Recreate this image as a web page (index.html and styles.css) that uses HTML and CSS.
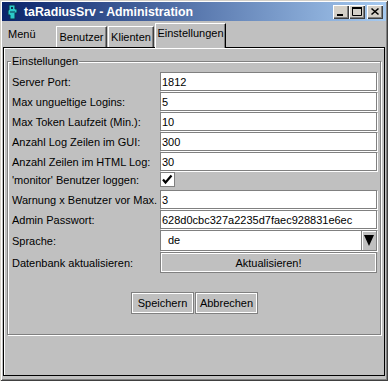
FILE: index.html
```html
<!DOCTYPE html>
<html lang="de">
<head>
    <meta charset="UTF-8">
    <title>taRadiusSrv - Administration</title>
    <link rel="stylesheet" href="styles.css">
</head>
<body>
    <div class="window">
        <div class="titlebar">
            <svg class="app-icon" width="16" height="16" viewBox="0 0 16 16">
                <path d="M4 1h6v4h2v4h-2v6H5v-4H3V6h1z" fill="#2ccaca" stroke="#0b3550" stroke-width="1"/>
                <rect x="6" y="3" width="2" height="2" fill="#0b3550"/>
                <path d="M5 8h5" stroke="#0b3550"/>
            </svg>
            <span class="title">taRadiusSrv - Administration</span>
            <div class="caption-buttons">
                <div class="caption-btn">
                    <svg width="14" height="12" viewBox="0 0 14 12"><rect x="3" y="8" width="6" height="2" fill="#000"/></svg>
                </div>
                <div class="caption-btn">
                    <svg width="14" height="12" viewBox="0 0 14 12"><path d="M2.5 1.5h9v8h-9z" fill="none" stroke="#000"/><rect x="2" y="1" width="10" height="2" fill="#000"/></svg>
                </div>
                <div class="caption-btn caption-close">
                    <svg width="14" height="12" viewBox="0 0 14 12"><path d="M3.5 2.5l7 6M10.5 2.5l-7 6" stroke="#000" stroke-width="1.6"/></svg>
                </div>
            </div>
        </div>

        <div class="tabrow">
            <div class="menu">Menü</div>
            <div class="tab tab-users">Benutzer</div>
            <div class="tab tab-clients">Klienten</div>
            <div class="tab tab-active">Einstellungen</div>
        </div>

        <div class="pane">
            <fieldset class="group">
                <legend>Einstellungen</legend>

                <div class="row">
                    <label>Server Port:</label>
                    <input class="field" type="text" value="1812">
                </div>
                <div class="row">
                    <label>Max ungueltige Logins:</label>
                    <input class="field" type="text" value="5">
                </div>
                <div class="row">
                    <label>Max Token Laufzeit (Min.):</label>
                    <input class="field" type="text" value="10">
                </div>
                <div class="row">
                    <label>Anzahl Log Zeilen im GUI:</label>
                    <input class="field" type="text" value="300">
                </div>
                <div class="row">
                    <label>Anzahl Zeilen im HTML Log:</label>
                    <input class="field" type="text" value="30">
                </div>
                <div class="row row-check">
                    <label>'monitor' Benutzer loggen:</label>
                    <div class="checkbox">
                        <svg width="13" height="13" viewBox="0 0 13 13"><path d="M2 6.5l2.5 3l6-7" fill="none" stroke="#000" stroke-width="2.2"/></svg>
                    </div>
                </div>
                <div class="row">
                    <label>Warnung x Benutzer vor Max.</label>
                    <input class="field" type="text" value="3">
                </div>
                <div class="row">
                    <label>Admin Passwort:</label>
                    <input class="field" type="text" value="628d0cbc327a2235d7faec928831e6ec">
                </div>
                <div class="row row-combo">
                    <label>Sprache:</label>
                    <div class="combo">
                        <span class="combo-value">de</span>
                        <span class="combo-arrow"><span class="triangle"></span></span>
                    </div>
                </div>
                <div class="row row-button">
                    <label>Datenbank aktualisieren:</label>
                    <button class="btn btn-wide">Aktualisieren!</button>
                </div>

                <div class="actions">
                    <button class="btn">Speichern</button>
                    <button class="btn">Abbrechen</button>
                </div>
            </fieldset>
        </div>
    </div>
</body>
</html>
```

FILE: styles.css
```css
* {
    box-sizing: border-box;
}
body {
    margin: 0;
    background: #c0c0c0;
    font-family: "Liberation Sans", Arial, sans-serif;
    font-size: 11px;
    color: #000;
}
.window {
    width: 388px;
    height: 381px;
    padding: 2px 2px 5px 2px;
    background: #c0c0c0;
    display: flex;
    flex-direction: column;
    box-shadow: inset 1px 1px 0 #d4d0c8, inset -1px -1px 0 #404040,
                inset 2px 2px 0 #fff, inset -2px -2px 0 #808080;
}
.titlebar {
    height: 19px;
    flex-shrink: 0;
    display: flex;
    align-items: center;
    padding: 0 3px 0 3px;
    background: linear-gradient(to right, #0a246a, #a6caf0);
}
.app-icon {
    margin-right: 3px;
}
.title {
    color: #fff;
    font-weight: bold;
    font-size: 12.3px;
    flex: 1;
}
.caption-buttons {
    display: flex;
}
.caption-btn {
    width: 16px;
    height: 14px;
    background: #d4d0c8;
    display: flex;
    align-items: center;
    justify-content: center;
    box-shadow: inset 1px 1px 0 #fff, inset -1px -1px 0 #404040, inset -2px -2px 0 #808080;
}
.caption-close {
    margin-left: 2px;
}
.tabrow {
    height: 26px;
    flex-shrink: 0;
    display: flex;
    align-items: flex-end;
}
.menu {
    width: 54px;
    height: 21px;
    padding-left: 6px;
    line-height: 16px;
}
.tab {
    height: 21px;
    padding: 0;
    margin-right: 1px;
    text-align: center;
    white-space: nowrap;
    line-height: 21px;
    border-top: 1px solid #fff;
    border-left: 1px solid #fff;
    border-right: 1px solid #404040;
    box-shadow: inset -1px 0 0 #808080;
}
.tab-users {
    width: 51px;
}
.tab-clients {
    width: 46px;
}
.tab-active {
    width: 71px;
    height: 25px;
    margin-bottom: -1px;
    margin-right: 0;
    line-height: 18px;
    position: relative;
    z-index: 1;
    background: #c0c0c0;
    border-right-color: #000;
}
.pane {
    flex: 1;
    margin: 0 1px;
    border: 1px solid #000;
    box-shadow: inset 1px 1px 0 #fff;
    padding: 7px 3px 0 3px;
}
.group {
    margin: 0;
    padding: 5px 3px 20px 4px;
    border: 1px solid #808080;
    box-shadow: inset 1px 1px 0 #fff, 1px 1px 0 #fff;
    min-width: 0;
}
.group legend {
    padding: 0 1px;
    margin-left: -1px;
    line-height: 12px;
    background: #c0c0c0;
}
.row {
    display: flex;
    align-items: center;
    height: 19px;
    margin-bottom: 1px;
}
.row label {
    width: 148px;
    flex-shrink: 0;
}
.field {
    width: 217px;
    height: 19px;
    margin: 0;
    padding: 0 1px;
    font: inherit;
    color: #000;
    background: #fff;
    border: 1px solid #808080;
    box-shadow: 1px 1px 0 #fff;
    outline: none;
}
.row-check {
    height: 15px;
    margin-bottom: 3px;
}
.checkbox {
    width: 15px;
    height: 15px;
    background: #fff;
    border: 1px solid #808080;
    display: flex;
    align-items: flex-end;
    justify-content: center;
}
.row-combo {
    height: 21px;
    margin-bottom: 1px;
}
.combo {
    width: 217px;
    height: 21px;
    display: flex;
    background: #fff;
    border: 1px solid #808080;
    box-shadow: 1px 1px 0 #fff;
}
.combo-value {
    flex: 1;
    padding-left: 7px;
    line-height: 19px;
}
.combo-arrow {
    width: 15px;
    background: #c0c0c0;
    border-left: 1px solid #808080;
    box-shadow: inset 1px 1px 0 #fff;
    display: flex;
    align-items: center;
    justify-content: center;
}
.triangle {
    width: 0;
    height: 0;
    border-left: 5px solid transparent;
    border-right: 5px solid transparent;
    border-top: 11px solid #000;
}
.row-button {
    height: 21px;
    margin-bottom: 0;
}
.btn {
    height: 22px;
    width: 63px;
    margin: 0;
    padding: 0;
    font: inherit;
    color: #000;
    background: #c0c0c0;
    border: 1px solid #808080;
    box-shadow: inset 0 0 0 1px #fff;
}
.btn-wide {
    width: 217px;
    height: 21px;
}
.actions {
    display: flex;
    justify-content: center;
    gap: 1px;
    margin-top: 19px;
}
```
